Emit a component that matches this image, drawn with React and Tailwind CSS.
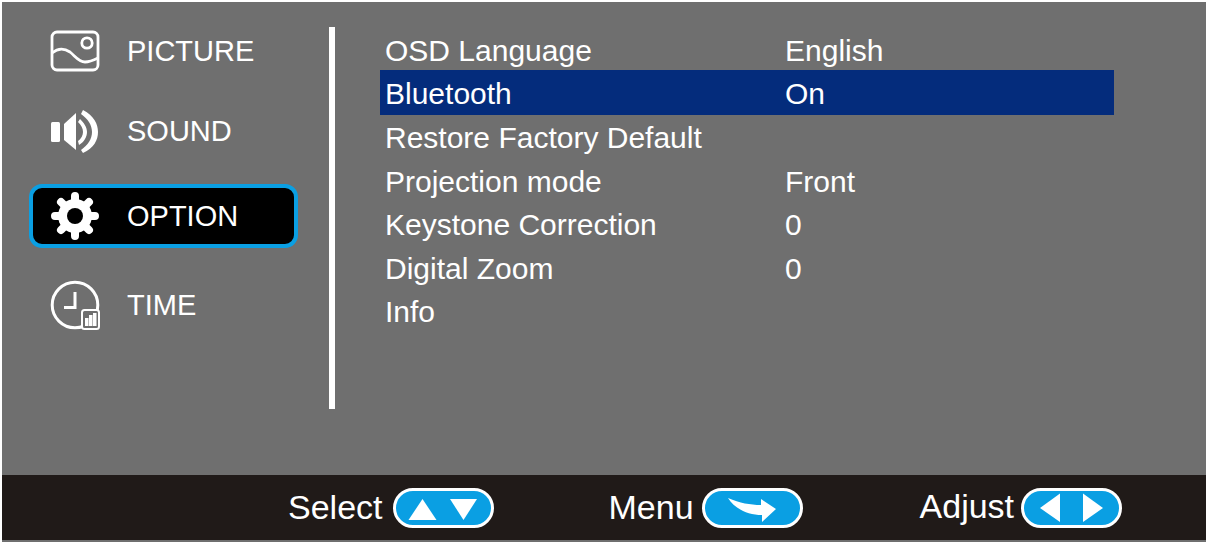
const font = { fontFamily: '"Liberation Sans", Arial, sans-serif' };

const PictureIcon = () => (
  <svg width="50" height="42" viewBox="0 0 50 42" fill="none" stroke="white" strokeWidth="2.8">
    <rect x="2" y="2" width="46" height="38" rx="5" />
    <circle cx="37" cy="13" r="5.2" />
    <path d="M2 23 C8 18 14 18 20 22 C26 27 29 32 35 32 C40 32 44 30 48 28" />
  </svg>
);
const SoundIcon = () => (
  <svg width="50" height="44" viewBox="0 0 50 44" fill="white">
    <rect x="1" y="12" width="9" height="20" rx="1.5" />
    <path d="M14 14 L26 3 V40 L14 30 Z" />
    <path d="M30 9 C34 13 37 17 37 22 C37 27 34 32 29 35 L28 31 C31 29 33 25 33 22 C33 18 31 15 28 12 Z" />
    <path d="M33 0 C44 6 48 14 48 22 C48 30 44 38 33 43 L31 40 C38 35 42 29 42 22 C42 15 38 9 31 4 Z" />
  </svg>
);
const GearIcon = () => (
  <svg width="50" height="50" viewBox="0 0 50 50">
    <g stroke="white" strokeWidth="8" strokeLinecap="round">
      <path d="M25 5 V45 M5 25 H45 M11 11 L39 39 M39 11 L11 39" />
    </g>
    <circle cx="25" cy="25" r="17" fill="white" />
    <circle cx="25" cy="25" r="8" fill="black" />
  </svg>
);
const TimeIcon = () => (
  <svg width="50" height="50" viewBox="0 0 50 50" fill="none">
    <circle cx="25" cy="25" r="22.8" stroke="white" strokeWidth="3" />
    <path d="M25 12 V27.5 H14" stroke="white" strokeWidth="3" />
    <rect x="32" y="30" width="17" height="19" rx="2.5" fill="#6f6f6f" stroke="white" strokeWidth="2" />
    <rect x="35" y="38" width="3.5" height="8" fill="white" />
    <rect x="39" y="35" width="3.5" height="11" fill="white" />
    <rect x="43" y="33" width="3.5" height="13" fill="white" />
  </svg>
);

const Pill = ({ children }) => (
  <svg width="101" height="40" viewBox="0 0 101 40">
    <rect x="1.5" y="1.5" width="98" height="37" rx="18.5" fill="#0a9fe3" stroke="white" strokeWidth="3" />
    {children}
  </svg>
);

const rows = [
  ["OSD Language", "English"],
  ["Bluetooth", "On"],
  ["Restore Factory Default", ""],
  ["Projection mode", "Front"],
  ["Keystone Correction", "0"],
  ["Digital Zoom", "0"],
  ["Info", ""],
];

const SideItem = ({ icon, label, className = "" }) => (
  <div className={`flex items-center ${className}`}>
    <div className="w-[50px] flex justify-center shrink-0">{icon}</div>
    <span className="ml-[27px] text-[29px] text-white leading-none">{label}</span>
  </div>
);

export default function App() {
  return (
    <div style={font} className="w-[1208px] h-[544px] bg-white p-[2px] overflow-hidden">
      <div className="w-full h-full bg-[#6f6f6f] flex flex-col">
        <div className="flex-1 flex">
          <div className="w-[327px] shrink-0 flex flex-col pl-[48px] pt-[28px]">
            <SideItem icon={<PictureIcon />} label="PICTURE" className="h-[42px]" />
            <SideItem icon={<SoundIcon />} label="SOUND" className="h-[44px] mt-[37.5px]" />
            <div className="mt-[30.5px] -ml-[21px] w-[269px] h-[64px] rounded-[13px] border-[4px] border-[#0a9fe3] bg-black pl-[17px] flex items-center">
              <SideItem icon={<GearIcon />} label="OPTION" />
            </div>
            <SideItem icon={<TimeIcon />} label="TIME" className="h-[50px] mt-[32px]" />
          </div>
          <div className="w-[6px] h-[382px] mt-[25px] bg-white shrink-0" />
          <div className="w-[734px] ml-[45px] pt-[24.5px] text-[30px] text-white">
            {rows.map(([a, b]) => (
              <div
                key={a}
                className={`flex items-center pl-[5px] ${a === "Bluetooth" ? "h-[45px] -mb-[1.5px] pt-[2px] bg-[#042c7c]" : "h-[43.5px] pt-[5px]"}`}
              >
                <span className="w-[400px] shrink-0 whitespace-nowrap">{a}</span>
                <span>{b}</span>
              </div>
            ))}
          </div>
        </div>
        <div className="h-[65px] mb-[2px] bg-[#201a18] flex items-center text-[34px] text-white">
          <div className="flex items-center ml-[286px]">
            <span>Select</span>
            <div className="ml-[10px] flex">
              <Pill>
                <path d="M15.5 32 H43.5 L29.5 11 Z" fill="white" />
                <path d="M57 11 H84 L70.5 32 Z" fill="white" />
              </Pill>
            </div>
          </div>
          <div className="flex items-center ml-[115px]">
            <span>Menu</span>
            <div className="ml-[8px] flex">
              <Pill>
                <path d="M26 10 C38 15 48 17 59 17 L59 11 L74 21 L60 34 L60 27 C45 27 32 20 26 10 Z" fill="white" />
              </Pill>
            </div>
          </div>
          <div className="flex items-center ml-[117px]">
            <span className="mb-[2px]">Adjust</span>
            <div className="ml-[7px] flex">
              <Pill>
                <path d="M39 5.5 V34 L19 20 Z" fill="white" />
                <path d="M62 5.5 V34 L82 20 Z" fill="white" />
              </Pill>
            </div>
          </div>
        </div>
      </div>
    </div>
  );
}
